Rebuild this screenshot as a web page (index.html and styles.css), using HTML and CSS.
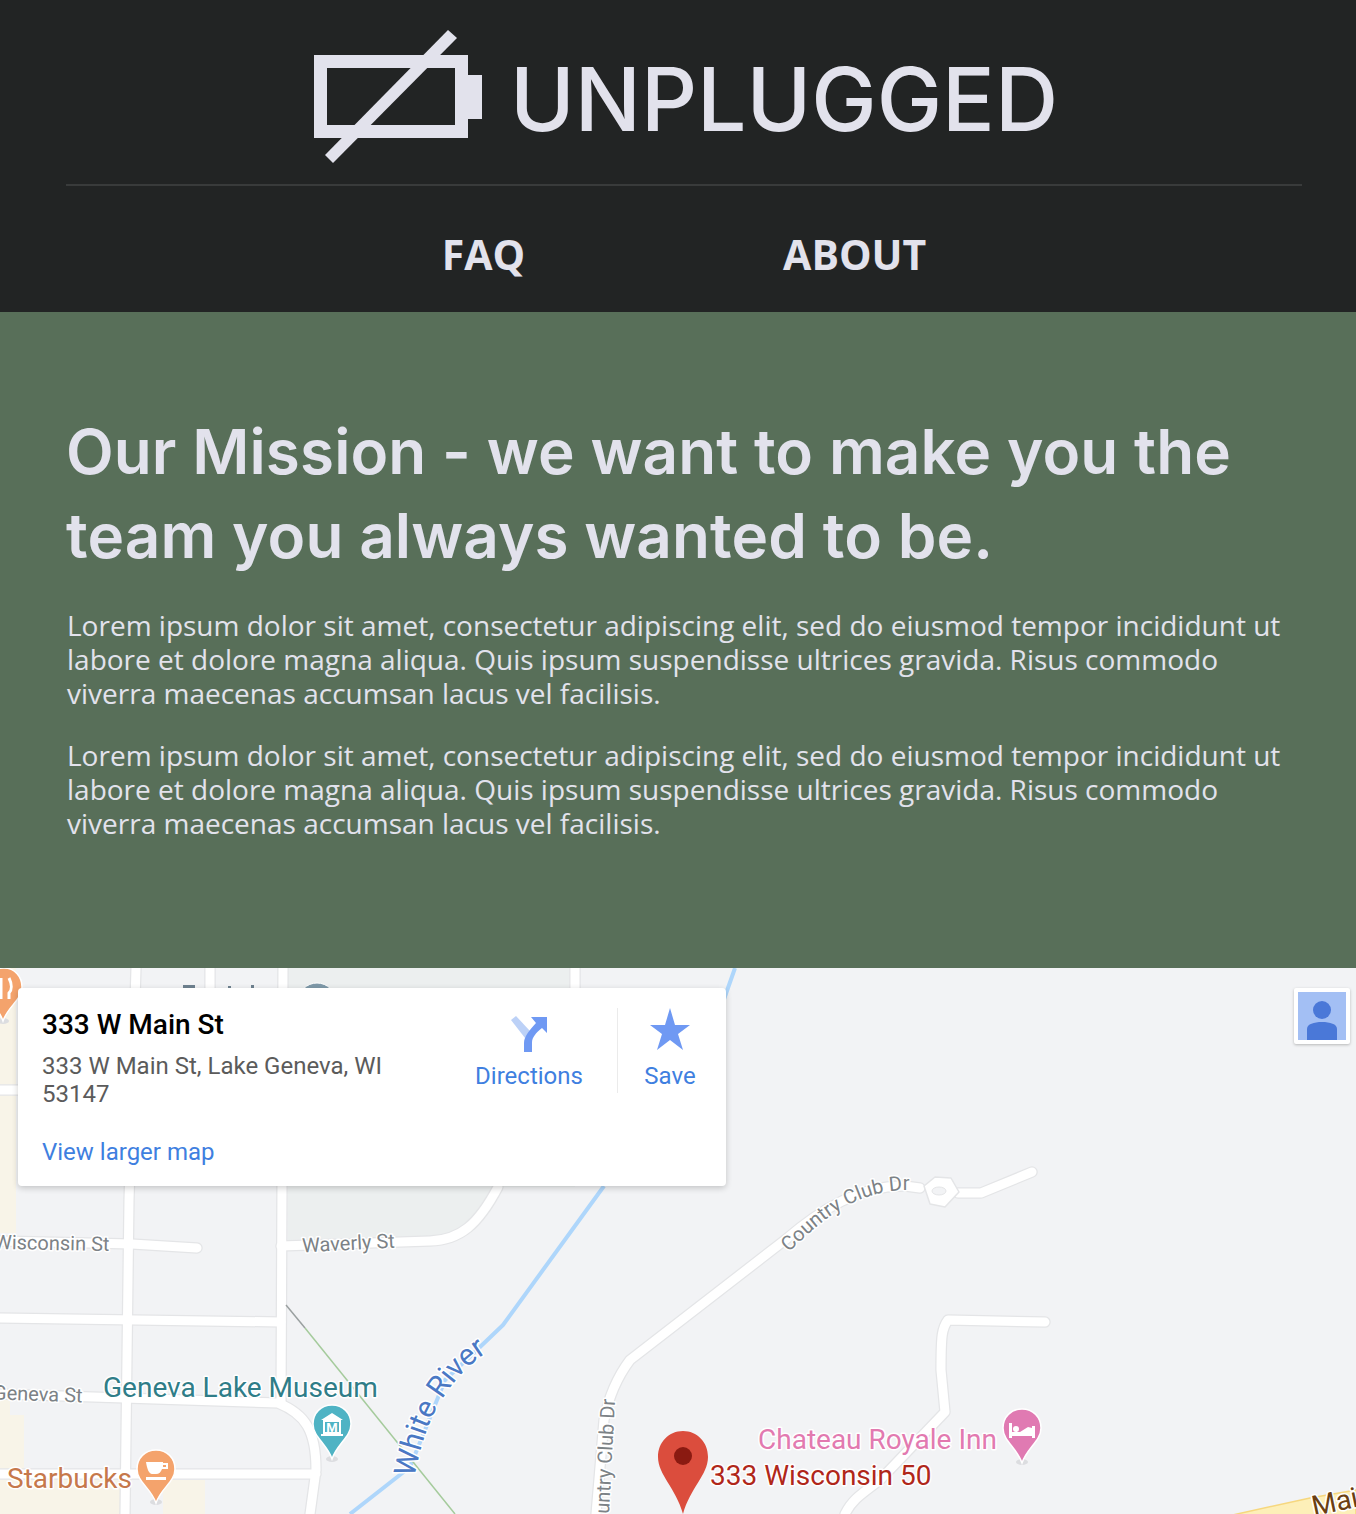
FILE: index.html
```html
<!DOCTYPE html>
<html lang="en">
<head>
    <title>Unplugged - About</title>
    <link rel="stylesheet" href="styles.css">
</head>
<body>
    <header class="site-header">
        <div class="brand">
            <svg class="brand-icon" width="168" height="134" viewBox="0 0 168 134">
                <path class="brand-shape" fill-rule="evenodd" d="M0 25H154V45H168V89H154V108H0ZM13 38V95H141V38Z"/>
                <path class="brand-shape" d="M134 0L143 8L19 133L11 125Z"/>
            </svg>
            <span class="brand-name">UNPLUGGED</span>
        </div>
        <nav class="main-nav">
            <a href="#">FAQ</a>
            <a href="#">ABOUT</a>
        </nav>
    </header>

    <section class="mission">
        <h1>Our Mission - we want to make you the team you always wanted to be.</h1>
        <p>Lorem ipsum dolor sit amet, consectetur adipiscing elit, sed do eiusmod tempor incididunt ut labore et dolore magna aliqua. Quis ipsum suspendisse ultrices gravida. Risus commodo viverra maecenas accumsan lacus vel facilisis.</p>
        <p>Lorem ipsum dolor sit amet, consectetur adipiscing elit, sed do eiusmod tempor incididunt ut labore et dolore magna aliqua. Quis ipsum suspendisse ultrices gravida. Risus commodo viverra maecenas accumsan lacus vel facilisis.</p>
    </section>

    <section class="map">
        <svg class="map-canvas" width="1356" height="546" viewBox="0 968 1356 546">
            <defs>
                <path id="club-curve" d="M789 1252C817 1225 850 1192 905 1190L930 1190"/>
                <path id="river-curve" d="M414 1478C421 1445 428 1420 443 1398C454 1381 468 1364 488 1352L510 1340"/>
            </defs>

            <!-- land use -->
            <path class="beige" d="M0 968H16V1233H0ZM0 1400H10V1415H24V1480H120V1514H0ZM163 1480H205V1514H163Z"/>
            <path class="park" d="M288 968H575V1187H498C480 1225 460 1236 430 1236L288 1240Z"/>

            <!-- roads -->
            <g class="road-edge">
                <path d="M136 968L129 1200L125 1514M210 968V1000M283 968L281 1402M575 968V1000"/>
                <path d="M0 1090H18M0 1241L132 1244L197 1248M0 1318L281 1322"/>
                <path d="M281 1246L430 1241C460 1240 478 1225 498 1187"/>
                <path d="M0 1394L278 1403C305 1414 316 1430 316 1470L310 1514M0 1474H316"/>
                <path d="M1032 1172L981 1193H958M920 1188L905 1186C860 1185 820 1210 785 1240L630 1360C615 1380 608 1400 604 1420L596 1514"/>
                <path d="M1045 1322L948 1320C942 1328 941 1335 941 1370L945 1412L880 1480C860 1495 852 1500 845 1514"/>
            </g>
            <g class="road">
                <path d="M136 968L129 1200L125 1514M210 968V1000M283 968L281 1402M575 968V1000"/>
                <path d="M0 1090H18M0 1241L132 1244L197 1248M0 1318L281 1322"/>
                <path d="M281 1246L430 1241C460 1240 478 1225 498 1187"/>
                <path d="M0 1394L278 1403C305 1414 316 1430 316 1470L310 1514M0 1474H316"/>
                <path d="M1032 1172L981 1193H958M920 1188L905 1186C860 1185 820 1210 785 1240L630 1360C615 1380 608 1400 604 1420L596 1514"/>
                <path d="M1045 1322L948 1320C942 1328 941 1335 941 1370L945 1412L880 1480C860 1495 852 1500 845 1514"/>
            </g>
            <path class="roundabout" d="M924 1186L935 1177L951 1178L959 1192L945 1207L930 1204Z"/>
            <ellipse class="roundabout-hole" cx="939" cy="1191" rx="7" ry="4"/>
            <path class="highway" d="M1228 1516L1310 1498L1356 1490V1516Z"/>

            <!-- water and rail -->
            <path class="river" d="M735 968L722 1005M604 1186L503 1325L480 1347L445 1380L425 1430L410 1467L350 1514"/>
            <path class="rail" d="M305 1328L455 1514"/>
            <path class="rail-grey" d="M286 1305L305 1328"/>

            <!-- labels -->
            <g class="label street">
                <text x="-6" y="1250" transform="rotate(1 55 1243)">Wisconsin St</text>
                <text x="302" y="1250" transform="rotate(-3 350 1243)">Waverly St</text>
                <text x="-7" y="1401" transform="rotate(2 40 1395)">Geneva St</text>
                <text><textPath href="#club-curve">Country Club Dr</textPath></text>
                <text x="609" y="1514" transform="rotate(-87 609 1514)">untry Club Dr</text>
            </g>
            <text class="label river-label"><textPath href="#river-curve">White River</textPath></text>
            <text class="label poi museum" x="103" y="1397">Geneva Lake Museum</text>
            <text class="label poi coffee" x="7" y="1488">Starbucks</text>
            <text class="label poi hotel" x="758" y="1449">Chateau Royale Inn</text>
            <text class="label poi pin-label" x="710" y="1485">333 Wisconsin 50</text>
            <text class="label main-st" x="1314" y="1516" transform="rotate(-12 1314 1516)">Main</text>

            <!-- place pins -->
            <rect class="hidden-label" x="183" y="985" width="12" height="4"/>
            <rect class="hidden-label" x="228" y="986" width="3" height="3"/>
            <rect class="hidden-label" x="251" y="985" width="3" height="4"/>

            <ellipse class="pin-shadow" cx="3" cy="1021" rx="6" ry="3"/>
            <path class="pin pin-food" d="M4 968C-8 968 -15 977 -15 987C-15 1000 -2 1006 3 1021C8 1006 22 1000 22 987C22 977 15 968 4 968Z"/>
            <path class="pin-fork" d="M1 978V999M9 978C12 984 12 990 9 993V999"/>
            <circle class="pin-grey" cx="317" cy="1002" r="19"/>

            <g>
                <ellipse class="pin-shadow" cx="332" cy="1459" rx="6" ry="3"/>
                <path class="pin pin-museum" d="M332 1405C321 1405 313 1413 313 1424C313 1437 327 1444 332 1459C337 1444 351 1437 351 1424C351 1413 343 1405 332 1405Z"/>
                <path class="pin-mark" d="M332 1413L321 1420H343ZM321 1434H343V1436H321Z"/>
                <rect class="pin-wall" x="324" y="1421" width="16" height="12"/>
                <text class="pin-letter" x="332" y="1432">M</text>
            </g>
            <g>
                <ellipse class="pin-shadow" cx="156" cy="1502" rx="6" ry="3"/>
                <path class="pin pin-coffee" d="M156 1450C145 1450 137 1458 137 1469C137 1482 151 1488 156 1503C161 1488 175 1482 175 1469C175 1458 167 1450 156 1450Z"/>
                <path class="pin-mark" fill-rule="evenodd" d="M146 1462H163V1463H168V1469H162C161 1472 159 1474 156 1474H152C149 1474 147 1469 146 1462ZM163 1465V1467H166V1465ZM146 1477H166V1480H146Z"/>
            </g>
            <g>
                <ellipse class="pin-shadow" cx="1022" cy="1462" rx="6" ry="3"/>
                <path class="pin pin-hotel" d="M1022 1409C1011 1409 1003 1417 1003 1428C1003 1441 1017 1448 1022 1463C1027 1448 1041 1441 1041 1428C1041 1417 1033 1409 1022 1409Z"/>
                <path class="pin-mark" d="M1009 1423H1012V1432H1020L1028 1427L1032 1428V1426H1035V1438H1032V1436H1012V1438H1009Z"/>
                <circle class="pin-mark" cx="1016" cy="1429" r="3"/>
            </g>

            <path class="marker" d="M683 1431C669 1431 658 1442 658 1457C658 1475 676 1488 683 1514C690 1488 708 1475 708 1457C708 1442 697 1431 683 1431Z"/>
            <ellipse class="marker-dot" cx="683" cy="1456" rx="9" ry="9"/>
        </svg>

        <div class="info-card">
            <div class="info-text">
                <div class="place-name">333 W Main St</div>
                <div class="place-address">333 W Main St, Lake Geneva, WI 53147</div>
                <a class="map-link" href="#">View larger map</a>
            </div>
            <div class="info-actions">
                <a class="action action-directions" href="#">
                    <svg width="38" height="38" viewBox="0 0 38 38">
                        <path class="dir-light" d="M1 5L6 1L20 16L15 23Z"/>
                        <path class="dir-dark" d="M14 37V28C14 21 20 15 26 8L21 2H37V18L32 13C26 18 22 22 22 28V37Z"/>
                    </svg>
                    <span>Directions</span>
                </a>
                <a class="action action-save" href="#">
                    <svg width="42" height="42" viewBox="0 0 42 42">
                        <path class="dir-dark" d="M21 0L26 17H41L29 26L34 42L21 32L8 42L13 26L1 17H16Z"/>
                    </svg>
                    <span>Save</span>
                </a>
            </div>
        </div>

        <div class="pegman">
            <svg width="48" height="48" viewBox="0 0 48 48">
                <rect class="pegman-bg" width="48" height="48"/>
                <circle class="pegman-fig" cx="24" cy="18" r="9"/>
                <path class="pegman-fig" d="M9 48V37C9 32 16 30 24 30C32 30 39 32 39 37V48Z"/>
            </svg>
        </div>
    </section>
</body>
</html>
```

FILE: styles.css
```css
html, body {
    margin: 0;
    padding: 0;
}

body {
    font-family: "Open Sans", sans-serif;
    background-color: #f2f3f5;
    overflow-x: hidden;
}

.site-header {
    height: 312px;
    background-color: #222424;
    box-sizing: border-box;
    padding: 30px 54px 0 66px;
}

.brand {
    display: flex;
    align-items: flex-start;
    justify-content: center;
    gap: 28px;
    height: 154px;
    padding-left: 4px;
    border-bottom: 2px solid #393b3b;
}

.brand-icon {
    display: block;
}

.brand-shape {
    fill: #e2e2ec;
}

.brand-name {
    font-family: Inter, sans-serif;
    font-size: 87.5px;
    font-weight: 500;
    line-height: 138px;
    color: #e2e2ec;
}

.main-nav {
    display: flex;
    justify-content: center;
    gap: 258px;
    padding-top: 40px;
}

.main-nav a {
    font-size: 41px;
    font-weight: 700;
    line-height: 56px;
    color: #e2e2ec;
    text-decoration: none;
}

.mission {
    height: 656px;
    box-sizing: border-box;
    padding: 98px 66px 0 67px;
    background-color: #586f59;
    color: #e2e2ec;
}

.mission h1 {
    font-family: Inter, sans-serif;
    font-size: 62px;
    font-weight: 600;
    line-height: 84px;
    letter-spacing: 0.1px;
    margin: 0 0 30px -1px;
    width: 1200px;
}

.mission p {
    font-size: 28px;
    line-height: 34px;
    margin: 0 0 28px;
}

.map {
    position: relative;
    height: 546px;
    overflow: hidden;
    background-color: #f2f3f5;
}

.map-canvas {
    display: block;
}

.beige {
    fill: #f8f4e8;
}

.park {
    fill: #ecefef;
}

.road-edge path,
.road path {
    fill: none;
    stroke-linecap: round;
    stroke-linejoin: round;
}

.road-edge path {
    stroke: #e4e5e7;
    stroke-width: 11.5;
}

.road path {
    stroke: #ffffff;
    stroke-width: 9;
}

.roundabout {
    fill: #ffffff;
    stroke: #e4e5e7;
    stroke-width: 1.5;
    stroke-linejoin: round;
}

.roundabout-hole {
    fill: #f2f3f5;
    stroke: #e4e5e7;
}

.highway {
    fill: #fdefb8;
    stroke: #f6d77e;
    stroke-width: 1.5;
}

.river {
    fill: none;
    stroke: #aed6fb;
    stroke-width: 4;
    stroke-linejoin: round;
}

.rail {
    fill: none;
    stroke: #a5cb9c;
    stroke-width: 1.5;
}

.rail-grey {
    fill: none;
    stroke: #9aa0a0;
    stroke-width: 1.5;
}

.label {
    font-family: Roboto, sans-serif;
    paint-order: stroke;
    stroke: #ffffff;
    stroke-width: 3px;
    stroke-linejoin: round;
}

.street {
    font-size: 20px;
    fill: #7c8286;
}

.river-label {
    font-size: 30px;
    fill: #4a78c4;
}

.poi {
    font-size: 28px;
}

.museum {
    fill: #2f7d88;
}

.coffee {
    fill: #c6784b;
}

.hotel {
    fill: #e27ab0;
}

.pin-label {
    fill: #b0271a;
}

.main-st {
    font-size: 28px;
    fill: #6b3f12;
}

.hidden-label {
    fill: #6f8290;
}

.pin {
    stroke: #ffffff;
    stroke-width: 1.5;
}

.pin-shadow {
    fill: #dcdde0;
}

.pin-food,
.pin-coffee {
    fill: #f4a36c;
}

.pin-museum {
    fill: #4fb3c4;
}

.pin-hotel {
    fill: #e07ab2;
}

.pin-grey {
    fill: #7f9aa9;
    stroke: #ffffff;
}

.pin-fork {
    fill: none;
    stroke: #ffffff;
    stroke-width: 3;
}

.pin-mark {
    fill: #ffffff;
}

.pin-wall {
    fill: none;
    stroke: #ffffff;
    stroke-width: 2;
}

.pin-letter {
    font-family: Roboto, sans-serif;
    font-size: 13px;
    font-weight: 700;
    text-anchor: middle;
    fill: #ffffff;
}

.marker {
    fill: #db4d3d;
}

.marker-dot {
    fill: #8a1a11;
}

.info-card {
    position: absolute;
    top: 20px;
    left: 18px;
    width: 708px;
    height: 198px;
    display: flex;
    box-sizing: border-box;
    padding: 20px 0 0 24px;
    background-color: #ffffff;
    border-radius: 4px;
    box-shadow: 0 2px 6px rgba(0, 0, 0, 0.2);
    font-family: Roboto, sans-serif;
}

.info-text {
    width: 360px;
}

.place-name {
    font-size: 28px;
    font-weight: 500;
    line-height: 34px;
    color: #000000;
}

.place-address {
    font-size: 24px;
    line-height: 28px;
    margin-top: 10px;
    color: #5b5b5b;
}

.map-link {
    display: block;
    margin-top: 27px;
    font-size: 24px;
    line-height: 34px;
    color: #3f7fe0;
    text-decoration: none;
}

.info-actions {
    display: flex;
    margin-left: 39px;
    height: 85px;
}

.action {
    display: flex;
    flex-direction: column;
    align-items: center;
    font-size: 24px;
    line-height: 30px;
    color: #3f7fe0;
    text-decoration: none;
}

.action-directions {
    width: 176px;
    padding-top: 7px;
    gap: 8px;
    border-right: 1px solid #ebebeb;
}

.action-save {
    width: 104px;
    gap: 11px;
}

.dir-light {
    fill: #bcd1f7;
}

.dir-dark {
    fill: #6f99f3;
}

.pegman {
    position: absolute;
    top: 20px;
    right: 6px;
    padding: 4px;
    background-color: #ffffff;
    border-radius: 2px;
    box-shadow: 0 1px 3px rgba(0, 0, 0, 0.25);
    line-height: 0;
}

.pegman-bg {
    fill: #a3bff4;
}

.pegman-fig {
    fill: #4a78d8;
}
```
